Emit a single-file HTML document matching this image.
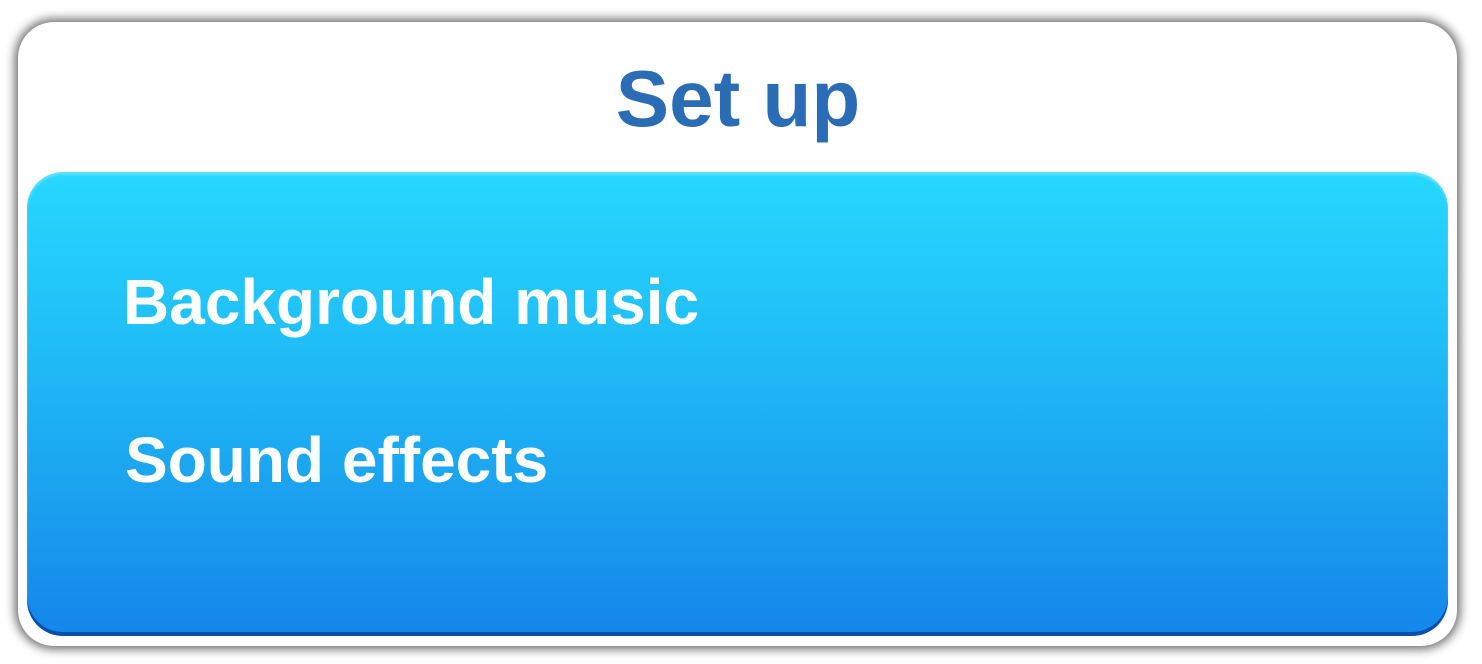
<!DOCTYPE html>
<html><head><style>
html,body{margin:0;padding:0;width:1482px;height:664px;background:#fff;overflow:hidden;font-family:"Liberation Sans",Arial,sans-serif;font-weight:bold}
.card{position:absolute;left:18px;top:22px;width:1439px;height:624px;border-radius:36px;background:#fff;box-shadow:0 0 10px 3px rgba(0,0,0,.6)}
.title{position:absolute;left:0;width:1476px;top:99px;text-align:center;font-size:80px;color:#2a6db5;line-height:0}
.panel{position:absolute;left:27px;top:172px;width:1421px;height:464px;border-radius:36px;background:linear-gradient(#27d8ff 0%,#1fbbf6 40%,#1a9cee 75%,#1386eb 100%);box-shadow:inset 0 -4px 0 #0a4fa8, inset 0 3px 2px rgba(255,255,255,.25)}
.t{position:absolute;color:#fff;font-size:64px;line-height:0}
</style></head><body>
<div class="card"></div>
<div class="title">Set up</div>
<div class="panel"></div>
<div class="t" style="left:123px;top:302px">Background music</div>
<div class="t" style="left:125px;top:460px">Sound effects</div>
</body></html>
